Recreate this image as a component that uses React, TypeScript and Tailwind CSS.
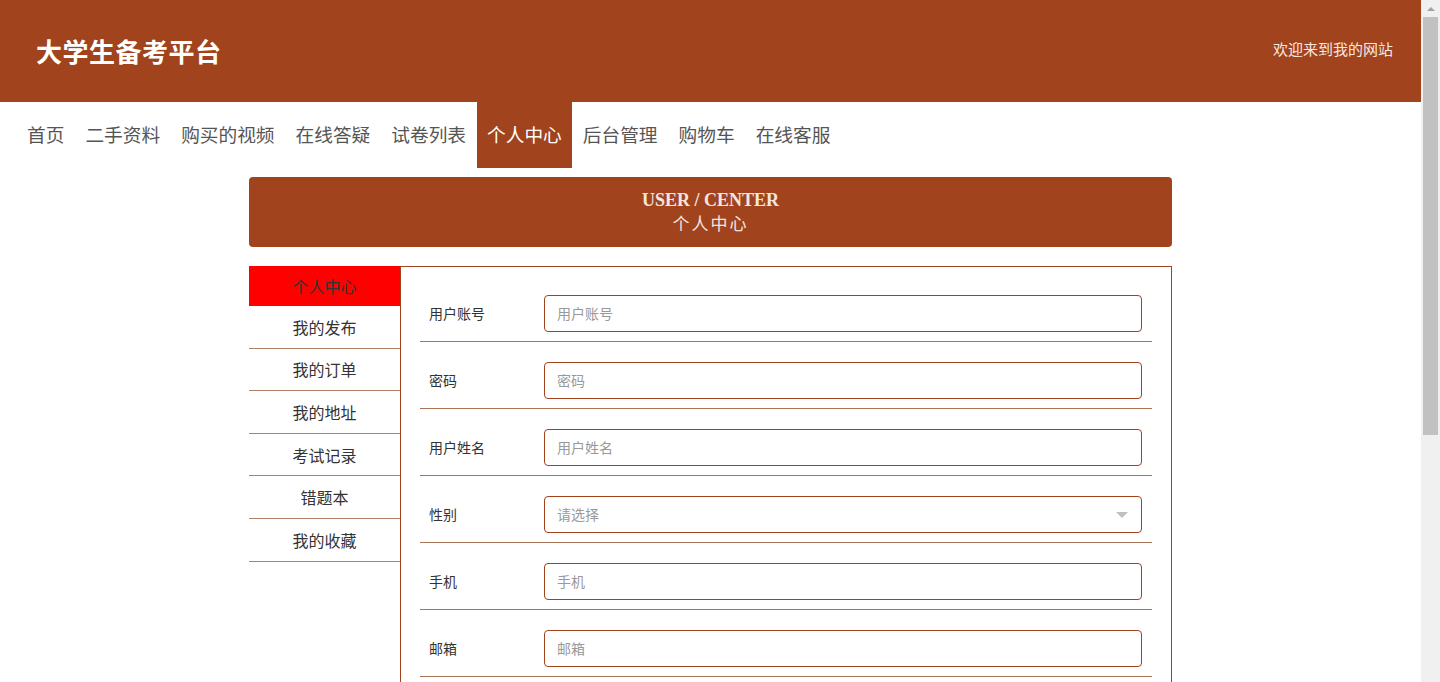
const navItems = [
  "首页",
  "二手资料",
  "购买的视频",
  "在线答疑",
  "试卷列表",
  "个人中心",
  "后台管理",
  "购物车",
  "在线客服",
];

const menuItems = [
  "个人中心",
  "我的发布",
  "我的订单",
  "我的地址",
  "考试记录",
  "错题本",
  "我的收藏",
];

const fields = [
  { label: "用户账号", type: "input" },
  { label: "密码", type: "input" },
  { label: "用户姓名", type: "input" },
  { label: "性别", type: "select" },
  { label: "手机", type: "input" },
  { label: "邮箱", type: "input" },
  { label: "头像", type: "input" },
];

const App = () => {
  return (
    <div className="flex h-[682px] overflow-hidden bg-white font-['Noto_Sans_CJK_SC','Noto_Sans',sans-serif]">
      <div className="flex-1 overflow-hidden">
        <header className="h-[102px] bg-[#a1431c] flex items-center justify-between pl-[36px] pr-[28px]">
          <h1 className="text-[26px] font-bold text-white tracking-[0.5px] pb-[2px]">
            大学生备考平台
          </h1>
          <span className="text-[15px] text-[#f6e8e2] pb-[4px]">
            欢迎来到我的网站
          </span>
        </header>

        <nav className="h-[66px] flex items-stretch pl-[17px] gap-[1px]">
          {navItems.map((item) => (
            <div
              key={item}
              className={
                item === "个人中心"
                  ? "px-[10px] flex items-center pb-[2px] text-[18.7px] bg-[#a1431c] text-white"
                  : "px-[10px] flex items-center pb-[2px] text-[18.7px] text-[#555]"
              }
            >
              {item}
            </div>
          ))}
        </nav>

        <div className="w-[923px] ml-[249px] mt-[9px]">
          <div className="h-[70px] rounded-[4px] bg-[#a1431c] flex flex-col items-center justify-center text-[#f3e6e0]">
            <div className="font-['Liberation_Serif',serif] text-[18px] leading-[22px] font-bold">
              USER / CENTER
            </div>
            <div className="text-[17px] leading-[24px] tracking-[2px]">
              个人中心
            </div>
          </div>

          <div className="flex mt-[19px]">
            <ul className="w-[151px] shrink-0">
              {menuItems.map((item, i) => (
                <li
                  key={item}
                  className={
                    i === 0
                      ? "h-[40px] flex items-center justify-center text-[16px] text-[#333] bg-[#ff0000]"
                      : "h-[42.6px] flex items-center justify-center text-[16px] text-[#333] border-b border-[#b08068]"
                  }
                >
                  {item}
                </li>
              ))}
            </ul>

            <div className="flex-1 border border-[#a1431c] pt-[8px] pl-[19px] pr-[19px]">
              {fields.map((f) => (
                <div
                  key={f.label}
                  className="flex items-center pt-[20px] pb-[9px] border-b border-[#a87458]"
                >
                  <div className="w-[124px] pl-[9px] text-[14px] text-[#333]">
                    {f.label}
                  </div>
                  <div className="w-[598px] h-[37px] rounded-[4px] border border-[#a1431c] flex items-center justify-between pl-[12px] pr-[13px] text-[14px] text-[#999]">
                    <span>{f.type === "select" ? "请选择" : f.label}</span>
                    {f.type === "select" && (
                      <span className="w-0 h-0 border-l-[6px] border-r-[6px] border-t-[6px] border-l-transparent border-r-transparent border-t-[#c0c0c0]" />
                    )}
                  </div>
                </div>
              ))}
            </div>
          </div>
        </div>
      </div>

      <div className="w-[19px] shrink-0 bg-[#f0f0f0] flex flex-col items-center">
        <div className="h-[17px] flex items-center justify-center">
          <span className="w-0 h-0 border-l-[4px] border-r-[4px] border-b-[4px] border-l-transparent border-r-transparent border-b-[#a3a3a3]" />
        </div>
        <div className="w-[15px] h-[418px] bg-[#c1c1c1]" />
      </div>
    </div>
  );
};

export default App;
